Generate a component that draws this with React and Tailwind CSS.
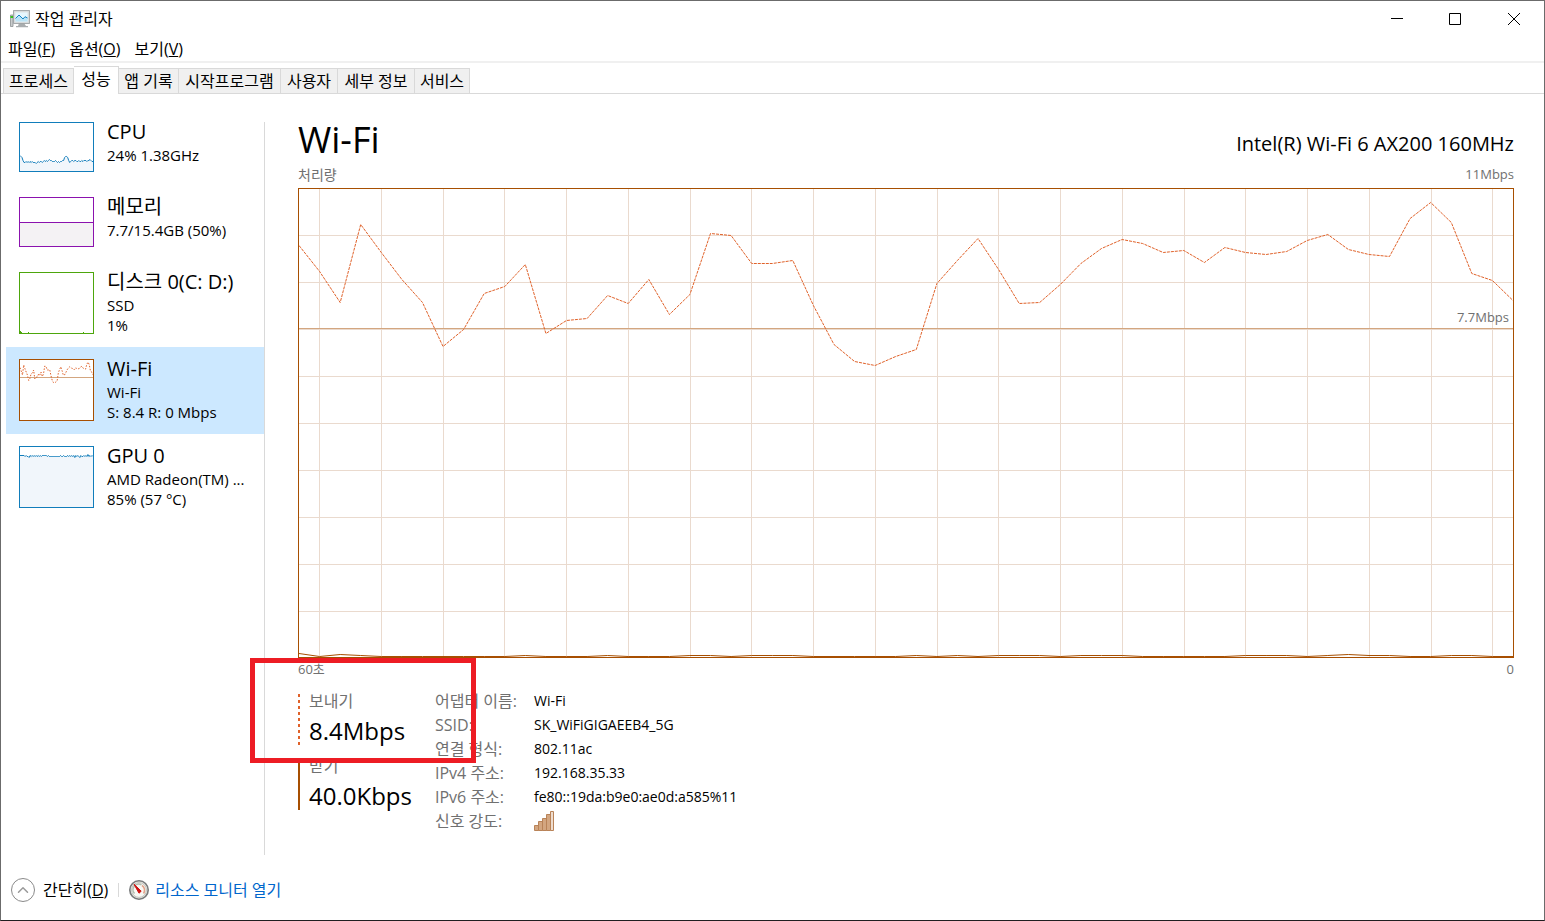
import { ChevronUp } from "lucide-react";

const MENUS = [
  { label: "파일", hotkey: "F" },
  { label: "옵션", hotkey: "O" },
  { label: "보기", hotkey: "V" },
];

const TABS = [
  { label: "프로세스", width: "w-[71px]" },
  { label: "성능", width: "w-[45px]", active: true },
  { label: "앱 기록", width: "w-[60px]" },
  { label: "시작프로그램", width: "w-[102px]" },
  { label: "사용자", width: "w-[57px]" },
  { label: "세부 정보", width: "w-[77px]" },
  { label: "서비스", width: "w-[55px]" },
];

// y values on a 0-468 scale, 0 is the top of the chart
const SEND = [
  56, 82, 113, 35, 63, 90, 113, 157, 140, 104, 97, 75, 144, 131, 129, 106, 114, 90, 125, 105,
  44, 46, 74, 74, 71, 116, 155, 172, 176, 167, 160, 94, 71, 49, 80, 114, 113, 95, 74, 59,
  50, 54, 63, 61, 73, 58, 63, 65, 62, 51, 45, 60, 65, 67, 29, 13, 33, 84, 91, 111,
];

const RECEIVE = [
  464, 467, 465, 466, 467, 467, 467, 467, 467, 467, 467, 466, 467, 467, 467, 466, 467, 467, 467, 466,
  466, 467, 466, 466, 466, 467, 467, 467, 467, 467, 466, 467, 466, 467, 466, 466, 466, 467, 466, 466,
  466, 467, 467, 467, 467, 467, 466, 466, 466, 467, 466, 465, 466, 466, 467, 467, 466, 466, 467, 467,
];

const CPU = [
  32, 33, 34, 37, 39, 39, 38, 39, 38, 39, 38, 39, 38, 39, 39, 39, 40, 39, 38, 39, 38, 38, 39, 38, 37,
  38, 37, 38, 37, 36, 37, 37, 38, 38, 38, 37, 38, 39, 38, 39, 38, 38, 37, 37, 34, 33, 33, 34, 37, 39,
  38, 37, 37, 38, 37, 37, 38, 38, 37, 38, 38, 37, 38, 37, 37, 37, 38, 37, 37, 36, 37, 38, 38,
];

const GPU = [
  8, 8, 8, 8, 8, 9, 8, 9, 9, 10, 8, 9, 8, 9, 8, 9, 8, 9, 8, 9, 8, 9, 8, 8, 8, 8, 8, 9, 8, 9, 9, 9, 9,
  9, 9, 9, 9, 9, 9, 9, 8, 9, 9, 8, 9, 9, 9, 8, 9, 8, 9, 8, 9, 8, 10, 8, 9, 8, 9, 10, 8, 9, 9, 8, 9, 8,
  9, 7, 9, 8, 9, 8, 9,
];

const toPoints = (values, width) =>
  values.map((y, i) => `${((i * width) / (values.length - 1)).toFixed(1)},${y + 0.5}`).join(" ");

const AreaThumb = ({ values, height }) => (
  <svg viewBox={`0 0 73 ${height}`} className="h-full w-full">
    <polygon points={`0,${height} ${toPoints(values, 73)} 73,${height}`} fill="#f1f6fb" />
    <polyline points={toPoints(values, 73)} fill="none" stroke="#117dbb" strokeWidth="1" />
  </svg>
);

const RESOURCES = [
  {
    name: "CPU",
    lines: ["24% 1.38GHz"],
    box: "h-[50px] border-[#117dbb]",
    thumb: <AreaThumb values={CPU} height={48} />,
  },
  {
    name: "메모리",
    lines: ["7.7/15.4GB (50%)"],
    box: "h-[50px] border-[#8b12ae]",
    thumb: <div className="mt-6 h-6 border-t border-[#8b12ae] bg-[#f4f2f4]" />,
  },
  {
    name: "디스크 0(C: D:)",
    lines: ["SSD", "1%"],
    box: "h-[62px] border-[#4da60c]",
    thumb: (
      <svg viewBox="0 0 73 60" className="h-full w-full">
        <path d="M0 58.5h1M0 59.5h2M8 59.5h1M63 59.5h1" stroke="#4da60c" strokeWidth="1" />
      </svg>
    ),
  },
  {
    name: "Wi-Fi",
    lines: ["Wi-Fi", "S: 8.4 R: 0 Mbps"],
    box: "h-[62px] border-[#a74f01]",
    active: true,
    thumb: (
      <svg viewBox="0 0 73 60" className="h-full w-full">
        <path d="M0 17.5h73" stroke="#d3a680" strokeWidth="1" />
        <polyline
          points={toPoints(SEND.map((y) => y * 0.128), 73)}
          fill="none"
          stroke="#e0622a"
          strokeWidth="1"
          strokeDasharray="1.5 1.5"
        />
      </svg>
    ),
  },
  {
    name: "GPU 0",
    lines: ["AMD Radeon(TM) ...", "85% (57 °C)"],
    box: "h-[62px] border-[#117dbb]",
    thumb: <AreaThumb values={GPU} height={60} />,
  },
];

const SignalBars = () => (
  <svg viewBox="0 0 20 20" className="h-5 w-5" role="img" aria-label="신호 강도">
    <g fill="#d3a680" stroke="#b98358" strokeWidth="1">
      <path d="M0.5 14.5h4v5h-4z" />
      <path d="M4.5 10.5h4v9h-4z" />
      <path d="M8.5 7.5h4v12h-4z" />
      <path d="M12.5 3.5h4v16h-4z" />
      <path d="M16.5 0.5h3v19h-3z" fill="#eeddd0" />
    </g>
  </svg>
);

const DETAILS = [
  { label: "어댑터 이름:", value: "Wi-Fi" },
  { label: "SSID:", value: "SK_WiFiGIGAEEB4_5G" },
  { label: "연결 형식:", value: "802.11ac" },
  { label: "IPv4 주소:", value: "192.168.35.33" },
  { label: "IPv6 주소:", value: "fe80::19da:b9e0:ae0d:a585%11" },
  { label: "신호 강도:", value: <SignalBars /> },
];

const AppIcon = () => (
  <svg viewBox="0 0 20 18" className="h-[18px] w-5" aria-hidden="true">
    <path d="M0.5 5h2.5v11.5h-2.5z" fill="#c9cccd" stroke="#8b9092" strokeWidth="0.8" />
    <path d="M0.5 6h3v2h-3z" fill="#35c21c" />
    <path d="M9 13h5l2 3h2v1.2H6V16h2z" fill="#a9adaf" />
    <rect x="3.6" y="0.6" width="15.8" height="12.8" fill="#dfe2e3" stroke="#9da2a4" />
    <rect x="5.5" y="2.5" width="12" height="9" fill="#e6f6fd" />
    <path d="M5.5 8.5L9 5l4 4 2-2.3 2.5 1.3v3.5h-12z" fill="#b9e3f6" />
    <path d="M5.5 8.5L9 5l4 4 2-2.3 2.5 1.3" fill="none" stroke="#1583c4" strokeWidth="1" />
  </svg>
);

const GaugeIcon = () => (
  <svg viewBox="0 0 20 20" className="h-5 w-5" aria-hidden="true">
    <circle cx="10" cy="10" r="9.2" fill="#e9e9e4" stroke="#77797a" strokeWidth="1.6" />
    <circle cx="10" cy="10" r="7.4" fill="#f8f8f4" stroke="#c3c5bf" strokeWidth="1" />
    <path d="M5.5 13.5a5.6 5.6 0 0 1 7-8.6" fill="none" stroke="#b4bdb0" strokeWidth="1.6" />
    <path d="M13 5.5a5.6 5.6 0 0 1 1.5 8" fill="none" stroke="#e3a48c" strokeWidth="1.6" />
    <path d="M5 4.2l7.2 7-2.2 2z" fill="#d01010" stroke="#d01010" strokeWidth="1" />
  </svg>
);

const ThroughputChart = () => (
  <div className="relative min-h-[200px] flex-1 border border-[#a74f01]">
    <svg
      viewBox="0 0 1214 468"
      preserveAspectRatio="none"
      className="absolute inset-0 h-full w-full"
      role="img"
      aria-label="처리량"
    >
      <g stroke="#eadace" strokeWidth="1" shapeRendering="crispEdges">
        {Array.from({ length: 9 }).map((_, i) => (
          <line key={i} x1="0" x2="1214" y1={(i + 1) * 46.9} y2={(i + 1) * 46.9} />
        ))}
        {Array.from({ length: 20 }).map((_, i) => (
          <line key={i} x1={20.5 + i * 61.75} x2={20.5 + i * 61.75} y1="0" y2="468" />
        ))}
      </g>
      <path d="M0 139.5h1214" stroke="#d3a680" strokeWidth="1" />
      <polyline
        points={toPoints(SEND, 1214)}
        fill="none"
        stroke="#e0622a"
        strokeWidth="1"
        strokeDasharray="3 1"
      />
      <polyline points={toPoints(RECEIVE, 1214)} fill="none" stroke="#a74f01" strokeWidth="1" />
    </svg>
    <div className="absolute inset-x-0 top-0 flex h-[30%] items-end justify-end pr-1 pb-1 text-[13px] leading-4 text-[#707070]">
      7.7Mbps
    </div>
  </div>
);

const App = () => {
  return (
    <div className="flex min-h-screen flex-col border border-[#6b6b6b] border-b-[#201e20] bg-white font-['Open_Sans','Noto_Sans_CJK_KR',sans-serif] text-sm text-black">
      {/* Title bar */}
      <header className="flex h-9 items-center justify-between pl-[9px]">
        <div className="flex items-center gap-[5px]">
          <AppIcon />
          <h1 className="text-base">작업 관리자</h1>
        </div>
        <div className="flex">
          <button aria-label="최소화" className="flex h-9 w-[58px] items-center justify-center">
            <svg viewBox="0 0 12 12" className="h-3 w-3">
              <path d="M0 5.5h12" stroke="#000" />
            </svg>
          </button>
          <button aria-label="최대화" className="flex h-9 w-[58px] items-center justify-center">
            <svg viewBox="0 0 12 12" className="h-3 w-3">
              <path d="M0.5 0.5h11v11h-11z" fill="none" stroke="#000" />
            </svg>
          </button>
          <button aria-label="닫기" className="flex h-9 w-[60px] items-center justify-center">
            <svg viewBox="0 0 12 12" className="h-3 w-3">
              <path d="M0 0l12 12M12 0L0 12" stroke="#000" />
            </svg>
          </button>
        </div>
      </header>

      {/* Menu bar */}
      <nav className="flex h-[26px] items-center gap-[14px] border-b-2 border-[#f0f0f0] px-[7px]">
        {MENUS.map((m) => (
          <button key={m.label} className="text-base leading-6">
            {m.label}(<u>{m.hotkey}</u>)
          </button>
        ))}
      </nav>

      {/* Tabs */}
      <div role="tablist" className="flex h-[31px] items-end border-b border-[#d9d9d9] pl-[2px]">
        {TABS.map((t) => (
          <button
            key={t.label}
            role="tab"
            aria-selected={!!t.active}
            className={`${t.width} whitespace-nowrap border-[#d9d9d9] text-base ${
              t.active
                ? "-mb-px h-7 border-t border-r bg-white pb-1 leading-6"
                : "h-[25px] border-t border-r bg-[#f0f0f0] leading-[22px] first:border-l"
            }`}
          >
            {t.label}
          </button>
        ))}
      </div>

      <main className="flex flex-1">
        {/* Resource list */}
        <aside className="flex w-[263px] shrink-0 flex-col pt-4 pl-[5px]">
          {RESOURCES.map((r) => (
            <button
              key={r.name}
              className={`flex gap-[13px] pt-2 pb-[13px] pl-[13px] text-left ${
                r.active ? "bg-[#cce8ff]" : ""
              }`}
            >
              <div className={`mt-1 w-[75px] shrink-0 border bg-white ${r.box}`}>{r.thumb}</div>
              <div className="-mb-3">
                <div className="text-xl leading-[27px]">{r.name}</div>
                {r.lines.map((line) => (
                  <div key={line} className="text-[15px] leading-5">
                    {line}
                  </div>
                ))}
              </div>
            </button>
          ))}
        </aside>

        {/* Wi-Fi panel */}
        <section className="mt-7 mb-1 flex flex-1 flex-col border-l border-[#d9d9d9] pr-[30px] pb-[22px] pl-[33px]">
          <div className="flex items-end justify-between">
            <h2 className="text-4xl leading-9">Wi-Fi</h2>
            <p className="text-xl leading-7">Intel(R) Wi-Fi 6 AX200 160MHz</p>
          </div>
          <div className="flex h-[30px] items-center justify-between pt-[3px] text-[13px] text-[#707070]">
            <span className="text-sm">처리량</span>
            <span>11Mbps</span>
          </div>

          <ThroughputChart />

          <div className="relative">
            <div className="flex h-[22px] items-center justify-between text-[13px] text-[#707070]">
              <span>60초</span>
              <span>0</span>
            </div>

            <div className="flex pt-[9px]">
              <div className="w-[137px] shrink-0">
                <div className="flex gap-[9px]">
                  <svg viewBox="0 0 2 51" className="mt-[5px] h-[51px] w-[2px]" aria-hidden="true">
                    <path d="M1 0v51" stroke="#e0622a" strokeWidth="2" strokeDasharray="3 3" />
                  </svg>
                  <div>
                    <p className="text-base leading-6 text-[#707070]">보내기</p>
                    <p className="text-2xl leading-9">8.4Mbps</p>
                  </div>
                </div>
                <div className="mt-[5px] flex gap-[9px]">
                  <div className="mt-1 h-[52px] w-[2px] bg-[#a74f01]" />
                  <div>
                    <p className="text-base leading-6 text-[#707070]">받기</p>
                    <p className="text-2xl leading-9">40.0Kbps</p>
                  </div>
                </div>
              </div>

              <dl className="grid grid-cols-[99px_auto] leading-6">
                {DETAILS.map((d) => (
                  <div key={d.label} className="col-span-2 grid h-6 grid-cols-subgrid items-center">
                    <dt className="text-base leading-6 whitespace-nowrap text-[#707070]">{d.label}</dt>
                    <dd>{d.value}</dd>
                  </div>
                ))}
              </dl>
            </div>

            {/* Highlight over the send rate */}
            <div className="pointer-events-none absolute top-0 -left-12 h-[105px] w-[226px] border-5 border-[#ed1c24]" />
          </div>
        </section>
      </main>

      {/* Footer */}
      <footer className="flex h-[61px] items-center pl-[10px]">
        <button className="flex items-center gap-2 text-base">
          <span className="flex h-6 w-6 items-center justify-center rounded-full border border-[#8a8a8a]">
            <ChevronUp className="h-[18px] w-[18px] text-[#9a9a9a]" />
          </span>
          <span>
            간단히(<u>D</u>)
          </span>
        </button>
        <span className="mx-[10px] h-[14px] w-px bg-[#d9d9d9]" />
        <a href="#resmon" className="flex items-center gap-[6px] text-base text-[#0066cc]">
          <GaugeIcon />
          리소스 모니터 열기
        </a>
      </footer>
    </div>
  );
};

export default App;
